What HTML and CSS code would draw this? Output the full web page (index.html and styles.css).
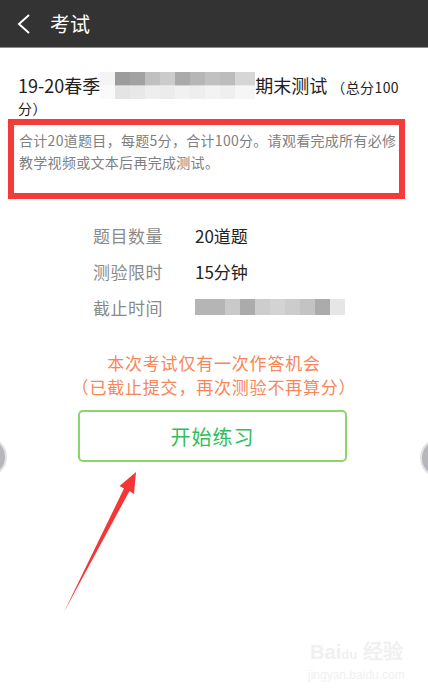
FILE: index.html
```html
<!DOCTYPE html>
<html lang="zh-CN">
<head>
  <meta charset="UTF-8">
  <meta name="viewport" content="width=device-width, initial-scale=1.0">
  <title>考试</title>
  <link rel="stylesheet" href="styles.css">
</head>
<body>
  <header class="topbar">
    <svg class="back-icon" width="16" height="22" viewBox="0 0 16 22">
      <polyline points="13,2 3,11 13,20" fill="none" stroke="#fff" stroke-width="2" stroke-linejoin="miter"/>
    </svg>
    <h1>考试</h1>
  </header>

  <main class="content">
    <h2 class="exam-title">19-20春季<span class="mosaic title-mosaic"></span>期末测试 <small>（总分100分）</small></h2>

    <div class="exam-desc">
      <p>合计20道题目，每题5分，合计100分。请观看完成所有必修教学视频或文本后再完成测试。</p>
    </div>

    <div class="exam-info">
      <div class="info-row">
        <span class="info-label">题目数量</span>
        <span class="info-value">20道题</span>
      </div>
      <div class="info-row">
        <span class="info-label">测验限时</span>
        <span class="info-value">15分钟</span>
      </div>
      <div class="info-row">
        <span class="info-label">截止时间</span>
        <span class="mosaic date-mosaic"></span>
      </div>
    </div>

    <p class="notice">本次考试仅有一次作答机会<br>（已截止提交，再次测验不再算分）</p>

    <button class="start-btn" type="button">开始练习</button>
  </main>

  <!-- annotation layer: arrow and the page-turn dots at the edges -->
  <svg class="marks" width="428" height="693" viewBox="0 0 428 693">
    <circle cx="-13" cy="457" r="19" fill="#b6b6bc" stroke="#e2e2e4" stroke-width="2"/>
    <circle cx="440" cy="458" r="19" fill="#b6b6bc" stroke="#e2e2e4" stroke-width="2"/>
    <polygon points="136,472 134,494 129.5,491 64,612 124,488.5 119.5,486" fill="#f53636"/>
  </svg>

  <div class="watermark">
    <span class="wm-logo">Bai<b>du</b> 经验</span>
    <span class="wm-url">jingyan.baidu.com</span>
  </div>
</body>
</html>
```

FILE: styles.css
```css
/* Global Styles */
body {
  margin: 0;
  padding: 0;
  background-color: #ffffff;
  font-family: "Noto Sans CJK SC", "Noto Sans", sans-serif;
  color: #222;
  width: 428px;
  height: 693px;
  position: relative;
  overflow: hidden;
}

.topbar {
  height: 47px;
  background-color: #333333;
  border-bottom: 1px solid #8c8c8c;
  display: flex;
  align-items: center;
  padding-left: 16px;
}

.back-icon {
  display: block;
}

.topbar h1 {
  margin: 0 0 0 18px;
  font-size: 20px;
  font-weight: normal;
  color: #ffffff;
  line-height: 1;
}

.content {
  padding: 27px 8px 0;
}

.exam-title {
  margin: 0;
  padding: 0 10px;
  font-size: 18px;
  font-weight: normal;
  line-height: 21px;
  color: #222;
}

.exam-title small {
  font-size: 14px;
  line-height: 1;
  letter-spacing: 0.4px;
}

/* blurred parts of the screenshot */
.mosaic {
  display: inline-block;
  vertical-align: middle;
}

.title-mosaic {
  vertical-align: top;
  width: 155px;
  height: 27px;
  margin: -3px 0;
  background:
    linear-gradient(to right, #f4f4f4 0 15px, #9c9c9c 15px 30px, #a2a2a2 30px 45px, #c0c0c0 45px 60px, #cbcbcb 60px 75px, #aaaaaa 75px 90px, #b6b6b6 90px 105px, #c1c1c1 105px 120px, #bcbcbc 120px 135px, #d6d6d6 135px) top / 100% 50% no-repeat,
    linear-gradient(to right, #fafafa 0 15px, #e4e4e4 15px 30px, #e8e8e8 30px 45px, #eeeeee 45px 60px, #ececec 60px 75px, #f1f1f1 75px 90px, #eeeeee 90px 105px, #f3f3f3 105px 120px, #efefef 120px 135px, #f6f6f6 135px) bottom / 100% 50% no-repeat;
}

.date-mosaic {
  width: 150px;
  height: 16px;
  background: linear-gradient(to right, #b5b5b5 0 30px, #c9c9c9 30px 45px, #ababab 45px 60px, #cdcdcd 60px 75px, #d3d3d3 75px 90px, #cccccc 90px 105px, #c3c3c3 105px 120px, #ababab 120px 135px, #e6e6e6 135px);
}

.exam-desc {
  margin: 2px 15px 0 0;
  height: 68px;
  border: 6px solid #f53a3a;
  padding: 0 0 0 5px;
}

.exam-desc p {
  margin: 4px 0 0;
  font-size: 14px;
  line-height: 22px;
  letter-spacing: 0.3px;
  color: #808080;
}

.exam-info {
  padding: 18px 0 0 85px;
}

.info-row {
  display: flex;
  align-items: center;
  height: 36px;
}

.info-label {
  width: 102px;
  font-size: 17px;
  letter-spacing: 0.5px;
  color: #8a8a8a;
}

.info-value {
  font-size: 17px;
  color: #222;
}

.notice {
  margin: 26px 0 0;
  text-align: center;
  font-size: 17px;
  line-height: 24px;
  letter-spacing: 0.8px;
  color: #f7865a;
}

.start-btn {
  display: block;
  margin: 11px 0 0 70px;
  width: 269px;
  height: 52px;
  background-color: #ffffff;
  border: 2px solid #8cd46c;
  border-radius: 5px;
  font-family: inherit;
  font-size: 20px;
  letter-spacing: 1px;
  color: #2fbf5b;
  cursor: pointer;
}

/* overlays of the screenshot */
.marks {
  position: absolute;
  top: 0;
  left: 0;
}

.watermark {
  position: absolute;
  left: 308px;
  top: 640px;
  display: flex;
  flex-direction: column;
  align-items: center;
  color: #f0f0f0;
  font-family: "Liberation Sans", sans-serif;
}

.wm-logo {
  font-size: 20px;
  font-weight: bold;
  line-height: 24px;
}

.wm-logo b {
  font-size: 13px;
}

.wm-url {
  font-size: 12px;
  line-height: 16px;
}
```
